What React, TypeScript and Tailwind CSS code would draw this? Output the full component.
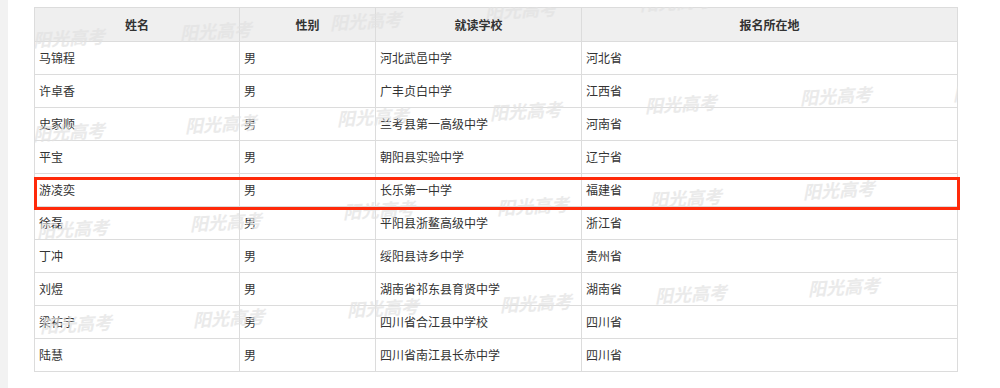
import React from "react";

type Student = {
  name: string;
  gender: string;
  school: string;
  region: string;
};

const students: Student[] = [
  { name: "马锦程", gender: "男", school: "河北武邑中学", region: "河北省" },
  { name: "许卓香", gender: "男", school: "广丰贞白中学", region: "江西省" },
  { name: "史家顺", gender: "男", school: "兰考县第一高级中学", region: "河南省" },
  { name: "平宝", gender: "男", school: "朝阳县实验中学", region: "辽宁省" },
  { name: "游凌奕", gender: "男", school: "长乐第一中学", region: "福建省" },
  { name: "徐磊", gender: "男", school: "平阳县浙鳌高级中学", region: "浙江省" },
  { name: "丁冲", gender: "男", school: "绥阳县诗乡中学", region: "贵州省" },
  { name: "刘煜", gender: "男", school: "湖南省祁东县育贤中学", region: "湖南省" },
  { name: "梁祐宁", gender: "男", school: "四川省合江县中学校", region: "四川省" },
  { name: "陆慧", gender: "男", school: "四川省南江县长赤中学", region: "四川省" },
];

// watermark grid in page coords: [left, top] of each "阳光高考" stamp
const marks: [number, number][] = [
  [33, 30], [180, 23], [330, 13], [485, 2], [640, -6], [795, -12],
  [33, 124], [185, 116], [337, 109], [490, 103], [645, 96], [800, 88], [953, 84],
  [37, 221], [190, 214], [343, 202], [497, 198], [650, 190], [803, 182], [956, 176],
  [40, 316], [193, 310], [347, 300], [500, 295], [655, 286], [808, 279],
];

const cell = "border border-[#dcdcdc] px-[4px] text-left font-normal";

export default function App() {
  return (
    <div
      className="relative flex w-[1000px] h-[388px] overflow-hidden bg-white text-[12px] text-[#333]"
      style={{ fontFamily: '"Noto Sans CJK SC", "Noto Sans", sans-serif' }}
    >
      <div className="w-[8px] shrink-0 bg-[#f2f2f2]" />
      <div className="pl-[26px] pt-[7px]">
        <div className="relative overflow-hidden">
          <table className="w-[923px] table-fixed border-collapse">
            <colgroup>
              <col className="w-[205px]" />
              <col className="w-[136px]" />
              <col className="w-[206px]" />
              <col className="w-[376px]" />
            </colgroup>
            <thead>
              <tr className="h-[34px] bg-[#efefef]">
                {["姓名", "性别", "就读学校", "报名所在地"].map((h) => (
                  <th
                    key={h}
                    className="border border-[#dcdcdc] text-center font-bold text-[#333]"
                  >
                    {h}
                  </th>
                ))}
              </tr>
            </thead>
            <tbody>
              {students.map((s) => (
                <tr key={s.name} className="h-[33px]">
                  <td className={cell}>{s.name}</td>
                  <td className={cell}>{s.gender}</td>
                  <td className={cell}>{s.school}</td>
                  <td className={cell}>{s.region}</td>
                </tr>
              ))}
            </tbody>
          </table>

          {/* watermark layer, clipped to the table */}
          <div className="pointer-events-none absolute inset-0">
            {marks.map(([x, y], i) => (
              <span
                key={i}
                className="absolute -rotate-3 whitespace-nowrap text-[18px] font-bold italic leading-none text-[#e2e2e2] opacity-70"
                style={{
                  left: x - 34,
                  top: y - 7,
                  fontFamily: '"Liberation Serif", "Noto Sans CJK SC", serif',
                }}
              >
                阳光高考
              </span>
            ))}
          </div>
        </div>
      </div>

      {/* highlight box around 游凌奕 */}
      <div className="pointer-events-none absolute left-[34px] top-[177px] h-[33px] w-[926px] border-[3px] border-[#ff2a0a]" />
    </div>
  );
}
